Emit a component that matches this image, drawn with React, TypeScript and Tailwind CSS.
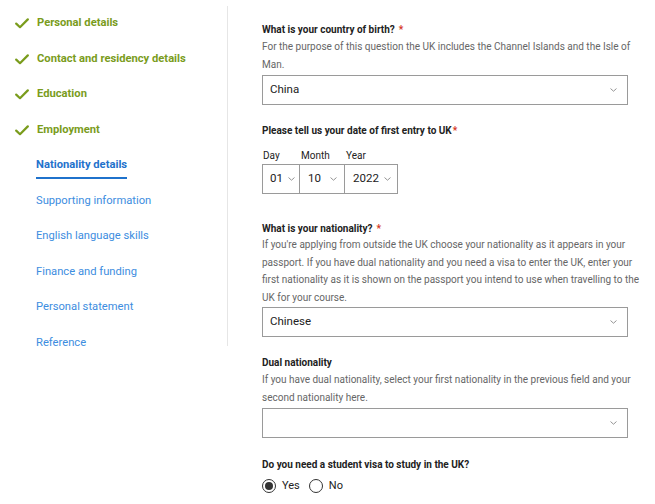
import { useState } from 'react';

const font = { fontFamily: 'Roboto, "Liberation Sans", sans-serif' };

const done = ['Personal details', 'Contact and residency details', 'Education', 'Employment'];
const todo = ['Supporting information', 'English language skills', 'Finance and funding', 'Personal statement', 'Reference'];

function Check() {
  return (
    <svg width="14" height="11" viewBox="0 0 14 11" fill="none" className="shrink-0">
      <path d="M1.2 5.6 L5 9.2 L12.8 1.4" stroke="#7a9c1c" strokeWidth="2.2" strokeLinecap="round" strokeLinejoin="round" />
    </svg>
  );
}

function Chevron() {
  return (
    <svg width="7" height="4" viewBox="0 0 7 4" fill="none" className="shrink-0">
      <path d="M0.8 0.8 L3.5 3.2 L6.2 0.8" stroke="#888" strokeWidth="0.9" strokeLinecap="round" strokeLinejoin="round" />
    </svg>
  );
}

function Select({ value, className = '' }: { value: string; className?: string }) {
  return (
    <div className={`h-[30px] border border-[#9a9a9a] flex items-center justify-between pl-[7px] pr-[10px] text-[11.5px] text-[#222] bg-white ${className}`}>
      <span>{value}</span>
      <Chevron />
    </div>
  );
}

function Label({ text, star = true, tight = false }: { text: string; star?: boolean; tight?: boolean }) {
  return (
    <p className="text-[10px] font-bold text-[#222] leading-[14px]">
      {text}
      {star && <span className={`text-[#d4351c] ${tight ? 'ml-[1px]' : 'ml-[4px]'}`}>*</span>}
    </p>
  );
}

function Radio({ checked, label }: { checked: boolean; label: string }) {
  return (
    <label className="flex items-center gap-[6px]">
      <span className="w-[14px] h-[14px] rounded-full border border-[#333] flex items-center justify-center">
        {checked && <span className="w-[8px] h-[8px] rounded-full bg-[#333]" />}
      </span>
      <span className="text-[11px] text-[#222]">{label}</span>
    </label>
  );
}

export default function App() {
  const [visa] = useState('yes');

  return (
    <div className="w-[655px] h-[504px] bg-white flex overflow-hidden" style={font}>
      {/* Sidebar */}
      <aside className="w-[228px] shrink-0 pt-[12px]">
        <div className="h-[340px] border-r border-[#e6e6e6]">
          <nav className="-mt-[6px] pl-[15px]">
            {done.map(item => (
              <div key={item} className="h-[35.5px] flex items-center gap-[8px]">
                <Check />
                <span className="text-[11.2px] font-bold text-[#7a9c1c]">{item}</span>
              </div>
            ))}
            <div className="h-[35.5px] flex items-center pl-[21px]">
              <span className="text-[11.2px] font-bold text-[#1f72cc] relative">
                Nationality details
                <span className="absolute left-0 right-0 -bottom-[5px] h-[2px] bg-[#1f72cc]" />
              </span>
            </div>
            {todo.map(item => (
              <div key={item} className="h-[35.5px] flex items-center pl-[21px]">
                <span className="text-[11.2px] text-[#3d8de0]">{item}</span>
              </div>
            ))}
          </nav>
        </div>
      </aside>

      {/* Form */}
      <main className="w-[366px] ml-[34px] pt-[23px]">
        <Label text="What is your country of birth?" />
        <p className="text-[10px] text-[#666] leading-[18px] mt-[1px] w-[374px]">
          For the purpose of this question the UK includes the Channel Islands and the Isle of Man.
        </p>
        <Select value="China" className="mt-[1px]" />

        <div className="mt-[19px]">
          <Label text="Please tell us your date of first entry to UK" tight />
        </div>
        <div className="flex mt-[10px]">
          <div className="w-[38px]">
            <p className="text-[10px] text-[#222] leading-[16px] pl-[1px]">Day</p>
            <div className="h-[30px] border border-[#9a9a9a] flex items-center gap-[5px] pl-[7px] text-[11.5px] text-[#222]">
              01 <Chevron />
            </div>
          </div>
          <div className="w-[45px]">
            <p className="text-[10px] text-[#222] leading-[16px] pl-[1px]">Month</p>
            <div className="h-[30px] border border-l-0 border-[#9a9a9a] flex items-center gap-[9px] pl-[8px] text-[11.5px] text-[#222]">
              10 <Chevron />
            </div>
          </div>
          <div className="w-[53px]">
            <p className="text-[10px] text-[#222] leading-[16px] pl-[1px]">Year</p>
            <div className="h-[30px] border border-l-0 border-[#9a9a9a] flex items-center gap-[5px] pl-[8px] text-[11.5px] text-[#222]">
              2022 <Chevron />
            </div>
          </div>
        </div>

        <div className="mt-[28px]">
          <Label text="What is your nationality?" />
        </div>
        <p className="text-[10px] text-[#666] leading-[17.5px] w-[382px]">
          If you're applying from outside the UK choose your nationality as it appears in your passport. If you have dual nationality and you need a visa to enter the UK, enter your first nationality as it is shown on the passport you intend to use when travelling to the UK for your course.
        </p>
        <Select value="Chinese" className="mt-[1px]" />

        <div className="mt-[19px]">
          <Label text="Dual nationality" star={false} />
        </div>
        <p className="text-[10px] text-[#666] leading-[17.5px] mt-[1px] w-[376px]">
          If you have dual nationality, select your first nationality in the previous field and your second nationality here.
        </p>
        <Select value="" className="mt-[2px]" />

        <div className="mt-[20px]">
          <Label text="Do you need a student visa to study in the UK?" star={false} />
        </div>
        <div className="flex items-center gap-[9px] mt-[6px]">
          <Radio checked={visa === 'yes'} label="Yes" />
          <Radio checked={visa === 'no'} label="No" />
        </div>
      </main>
    </div>
  );
}
